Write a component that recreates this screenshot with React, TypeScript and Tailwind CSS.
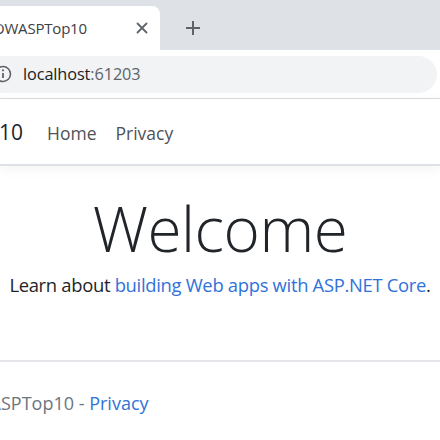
import React from 'react';

const ui = { fontFamily: '"Open Sans", "Noto Sans", sans-serif' };

function ChromeBar() {
  return (
    <div className="bg-white">
      {/* tab strip */}
      <div className="h-[50px] bg-[#dee1e6] flex items-end">
        <div className="h-[44px] w-[167px] bg-white rounded-tr-[8px] flex items-center justify-between pr-[12px] -ml-[7px]">
          <span className="text-[15px] text-[#3c4043] tracking-[-0.2px]" style={ui}>OWASPTop10</span>
          <svg width="12" height="12" viewBox="0 0 12 12" className="text-[#5f6368]">
            <path d="M1.5 1.5 L10.5 10.5 M10.5 1.5 L1.5 10.5" stroke="currentColor" strokeWidth="1.8" strokeLinecap="round" />
          </svg>
        </div>
        <div className="h-[44px] flex items-center pl-[25px]">
          <svg width="16" height="16" viewBox="0 0 16 16" className="text-[#5f6368]">
            <path d="M8 1 V15 M1 8 H15" stroke="currentColor" strokeWidth="2" />
          </svg>
        </div>
      </div>
      {/* toolbar */}
      <div className="h-[49px] flex items-center border-b border-[#dadce0]">
        <div className="h-[37px] flex-1 bg-[#f1f3f4] rounded-r-full -ml-[10px] mr-[3px] flex items-center">
          <svg width="20" height="20" viewBox="0 0 20 20" className="text-[#5f6368] ml-[3px]">
            <circle cx="10" cy="10" r="7.5" fill="none" stroke="currentColor" strokeWidth="1.6" />
            <path d="M10 9 V14" stroke="currentColor" strokeWidth="1.8" />
            <circle cx="10" cy="6.3" r="1.1" fill="currentColor" />
          </svg>
          <span className="ml-[10px] text-[16.3px] tracking-[-0.1px]" style={ui}>
            <span className="text-[#202124]">localhost</span>
            <span className="text-[#5f6368]">:61203</span>
          </span>
        </div>
      </div>
    </div>
  );
}

export default function App() {
  return (
    <div className="w-[440px] h-[440px] overflow-hidden bg-white" style={ui}>
      <ChromeBar />
      <nav className="h-[67px] pt-[3px] flex items-center border-b-[2px] border-[#dee2e6] shadow-[0_3px_12px_rgba(0,0,0,0.05)] relative">
        <span className="text-[21px] text-[#212529] -ml-[1px]">10</span>
        <a className="ml-[24px] text-[17.5px] text-[#4f5256]">Home</a>
        <a className="ml-[19px] text-[17.5px] text-[#4f5256]">Privacy</a>
      </nav>
      <main className="h-[194px] flex flex-col items-center pt-[31px]">
        <h1 className="text-[62px] font-light leading-none text-[#212529] tracking-[-0.5px]">Welcome</h1>
        <p className="mt-[12px] text-[18.4px] text-[#212529] tracking-[-0.3px] whitespace-nowrap">
          Learn about <a className="text-[#2f72d9]">building Web apps with ASP.NET Core</a>.
        </p>
      </main>
      <footer className="border-t-[2px] border-[#e3e5e8] pt-[28px] overflow-hidden">
        <p className="text-[18px] text-[#6c757d] whitespace-nowrap -ml-[117px]">
          © 2020 - OWASPTop10 - <a className="text-[#2f72d9]">Privacy</a>
        </p>
      </footer>
    </div>
  );
}
